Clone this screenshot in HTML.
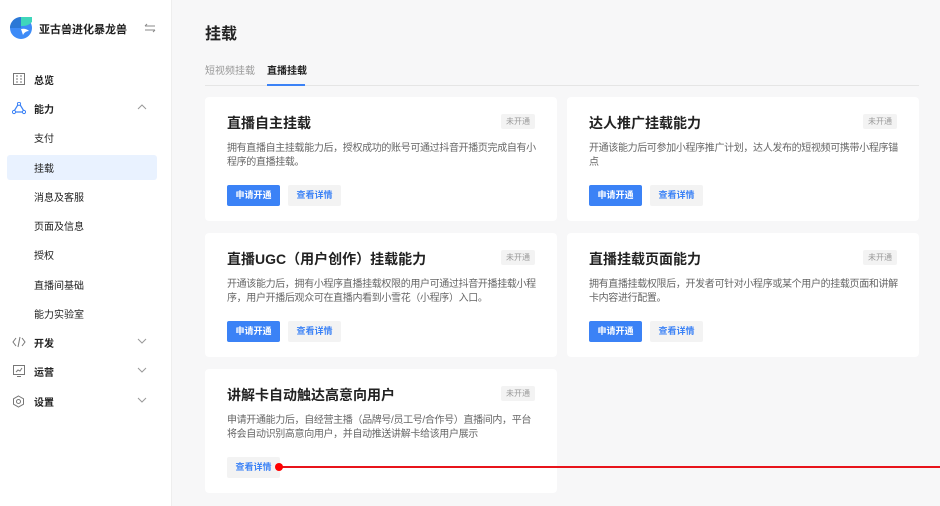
<!DOCTYPE html><html><head><meta charset="utf-8"><style>
*{margin:0;padding:0;box-sizing:border-box}
body{width:940px;height:506px;overflow:hidden;background:#f7f7f8;font-family:"Liberation Sans","Noto Sans CJK SC",sans-serif;position:relative}
.side{position:absolute;left:0;top:0;width:172px;height:506px;background:#fff;border-right:1px solid #eee}
.brand{position:absolute;left:39px;top:21px;font-size:11px;font-weight:bold;color:#222}
.nav{position:absolute;left:0;width:172px;font-size:10px;color:#222;height:14px}
.nav .t{position:absolute;left:34px;top:0}
.nav .ic{position:absolute;left:12px;top:1px}
.nav .ch{position:absolute;left:137px;top:3px}
.sel{position:absolute;left:7px;top:155px;width:150px;height:25px;background:#e9f2ff;border-radius:3px}
h1{position:absolute;left:205px;top:20px;font-size:16px;font-weight:bold;color:#222}
.tabs{position:absolute;left:205px;top:61px;width:714px;height:25px;border-bottom:1px solid #e5e5e5;font-size:10px}
.card{position:absolute;width:352px;height:124px;background:#fff;border-radius:4px}
.card h2{position:absolute;left:22px;top:16px;font-size:14px;font-weight:bold;color:#222}
.card .tag{position:absolute;right:22px;top:17px;width:34px;height:15px;background:#f3f3f3;color:#999;font-size:8px;line-height:15px;text-align:center;border-radius:2px}
.card p{position:absolute;left:22px;top:45px;white-space:nowrap;font-size:10px;letter-spacing:-0.35px;line-height:13.5px;color:#666}
.btn{position:absolute;top:88px;height:21px;line-height:21px;font-size:9px;border-radius:2px;text-align:center;font-weight:bold}
.b1{left:22px;width:53px;background:#3b82f6;color:#fff}
.b2{left:83px;width:53px;background:#f3f3f3;color:#3b82f6}
</style></head><body>
<div class="side">
<svg style="position:absolute;left:10px;top:17px" width="22" height="22" viewBox="0 0 22 22"><circle cx="11" cy="11" r="11" fill="#3d8bf7"/><path d="M0 11A11 11 0 0 1 11 0V11Z" fill="#2b78d6"/><path d="M11 0H22V5Q18 9 13 9H11Z" fill="#3fd6bb"/><path d="M11 12Q16 11 19 14Q15 14 13 18Q12 15 11 12Z" fill="#fff"/></svg>
<div class="brand">亚古兽进化暴龙兽</div>
<svg style="position:absolute;left:144px;top:23px" width="12" height="10"><path d="M1 3h10M1 3l2-2M11 7H1M11 7l-2 2" stroke="#888" fill="none"/></svg>
<div class="sel"></div>
<div class="nav" style="top:72px"><svg class="ic" style="left:13px" width="12" height="12"><rect x=".5" y=".5" width="11" height="11" fill="none" stroke="#777"/><path d="M3 3h2M3 6h2M3 9h2M7 3h2M7 6h2M7 9h2" stroke="#777"/></svg><span class="t" style="font-weight:bold">总览</span></div>
<div class="nav" style="top:101px"><svg class="ic" width="14" height="13"><path d="M7 1L12.5 10H1.5Z" fill="none" stroke="#3b82f6" stroke-width="1.2"/><circle cx="7" cy="1.8" r="1.6" fill="#fff" stroke="#3b82f6"/><circle cx="2" cy="10" r="1.6" fill="#fff" stroke="#3b82f6"/><circle cx="12" cy="10" r="1.6" fill="#fff" stroke="#3b82f6"/></svg><span class="t" style="font-weight:bold">能力</span><svg class="ch" width="10" height="6"><path d="M1 5l4-4 4 4" stroke="#999" fill="none"/></svg></div>
<div class="nav" style="top:130px"><span class="t">支付</span></div>
<div class="nav" style="top:160px"><span class="t">挂载</span></div>
<div class="nav" style="top:189px"><span class="t">消息及客服</span></div>
<div class="nav" style="top:218px"><span class="t">页面及信息</span></div>
<div class="nav" style="top:247px"><span class="t">授权</span></div>
<div class="nav" style="top:277px"><span class="t">直播间基础</span></div>
<div class="nav" style="top:306px"><span class="t">能力实验室</span></div>
<div class="nav" style="top:335px"><svg class="ic" width="14" height="12"><path d="M4 2L1 6l3 4M10 2l3 4-3 4M8 1L6 11" stroke="#777" fill="none"/></svg><span class="t" style="font-weight:bold">开发</span><svg class="ch" width="10" height="6"><path d="M1 1l4 4 4-4" stroke="#999" fill="none"/></svg></div>
<div class="nav" style="top:364px"><svg class="ic" style="left:13px" width="12" height="12"><rect x=".5" y=".5" width="11" height="9" fill="none" stroke="#777"/><path d="M3 7l2-2 2 1 2-3M4 11.5h4" stroke="#777" fill="none"/></svg><span class="t" style="font-weight:bold">运营</span><svg class="ch" width="10" height="6"><path d="M1 1l4 4 4-4" stroke="#999" fill="none"/></svg></div>
<div class="nav" style="top:394px"><svg class="ic" width="13" height="13"><path d="M6.5 1L11.5 3.8V9.2L6.5 12L1.5 9.2V3.8Z" fill="none" stroke="#777"/><circle cx="6.5" cy="6.5" r="2" fill="none" stroke="#777"/></svg><span class="t" style="font-weight:bold">设置</span><svg class="ch" width="10" height="6"><path d="M1 1l4 4 4-4" stroke="#999" fill="none"/></svg></div>
</div>
<h1>挂载</h1>
<div class="tabs"><span style="position:absolute;left:0;top:1px;color:#999">短视频挂载</span><span style="position:absolute;left:62px;top:1px;color:#222;font-weight:bold">直播挂载</span><div style="position:absolute;left:62px;top:23px;width:38px;height:2px;background:#3b82f6"></div></div>

<div class="card" style="left:205px;top:97px"><h2>直播自主挂载</h2><div class="tag">未开通</div><p>拥有直播自主挂载能力后，授权成功的账号可通过抖音开播页完成自有小<br>程序的直播挂载。</p><div class="btn b1">申请开通</div><div class="btn b2">查看详情</div></div>
<div class="card" style="left:567px;top:97px"><h2>达人推广挂载能力</h2><div class="tag">未开通</div><p>开通该能力后可参加小程序推广计划，达人发布的短视频可携带小程序锚<br>点</p><div class="btn b1">申请开通</div><div class="btn b2">查看详情</div></div>
<div class="card" style="left:205px;top:233px"><h2>直播UGC（用户创作）挂载能力</h2><div class="tag">未开通</div><p>开通该能力后，拥有小程序直播挂载权限的用户可通过抖音开播挂载小程<br>序，用户开播后观众可在直播内看到小雪花（小程序）入口。</p><div class="btn b1">申请开通</div><div class="btn b2">查看详情</div></div>
<div class="card" style="left:567px;top:233px"><h2>直播挂载页面能力</h2><div class="tag">未开通</div><p>拥有直播挂载权限后，开发者可针对小程序或某个用户的挂载页面和讲解<br>卡内容进行配置。</p><div class="btn b1">申请开通</div><div class="btn b2">查看详情</div></div>
<div class="card" style="left:205px;top:369px"><h2>讲解卡自动触达高意向用户</h2><div class="tag">未开通</div><p>申请开通能力后，自经营主播（品牌号/员工号/合作号）直播间内，平台<br>将会自动识别高意向用户，并自动推送讲解卡给该用户展示</p><div class="btn b2" style="left:22px">查看详情</div></div>
<div style="position:absolute;left:279px;top:466px;width:661px;height:1.5px;background:#e8141b"></div>
<div style="position:absolute;left:275px;top:463px;width:8px;height:8px;border-radius:50%;background:#f00"></div>
</body></html>
